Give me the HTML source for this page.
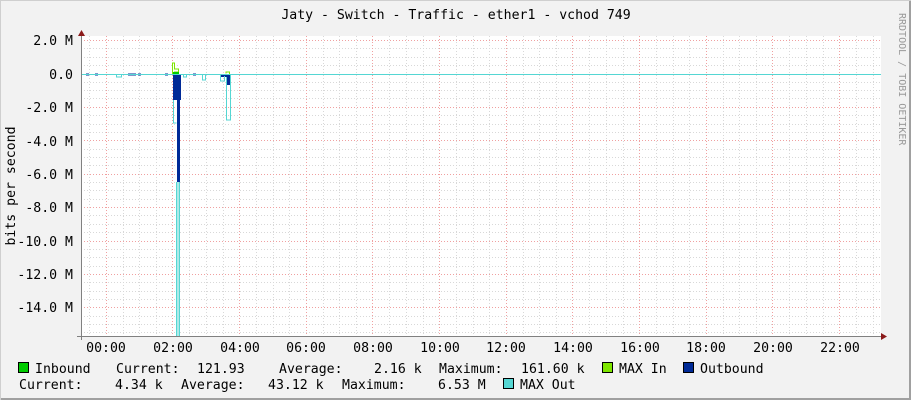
<!DOCTYPE html>
<html><head><style>
body{margin:0;background:#f2f2f2}
svg{display:block}
text{font-family:"DejaVu Sans Mono","Liberation Mono",monospace;font-size:13.2px;fill:#000}
</style></head><body>
<svg width="911" height="400" xmlns="http://www.w3.org/2000/svg">
<rect x="0" y="0" width="911" height="400" fill="#f2f2f2"/>
<rect x="909" y="0" width="2" height="400" fill="#a0a0a0"/>
<rect x="0" y="398" width="911" height="2" fill="#a0a0a0"/>
<rect x="0" y="0" width="911" height="1" fill="#cfcfcf"/>
<rect x="0" y="0" width="1" height="400" fill="#cfcfcf"/>
<rect x="81" y="36" width="800" height="300" fill="#fff"/>
<g stroke="#d8d8d8" stroke-width="1" stroke-dasharray="1,2">
<path d="M89.5 36V336M123.5 36V336M139.5 36V336M156.5 36V336M189.5 36V336M206.5 36V336M223.5 36V336M256.5 36V336M273.5 36V336M289.5 36V336M323.5 36V336M339.5 36V336M356.5 36V336M389.5 36V336M406.5 36V336M423.5 36V336M456.5 36V336M473.5 36V336M489.5 36V336M523.5 36V336M539.5 36V336M556.5 36V336M589.5 36V336M606.5 36V336M623.5 36V336M656.5 36V336M673.5 36V336M689.5 36V336M723.5 36V336M739.5 36V336M756.5 36V336M789.5 36V336M806.5 36V336M823.5 36V336M856.5 36V336M873.5 36V336"/>
<path d="M81 48.5H881M81 57.5H881M81 65.5H881M81 82.5H881M81 90.5H881M81 98.5H881M81 115.5H881M81 124.5H881M81 132.5H881M81 149.5H881M81 157.5H881M81 165.5H881M81 182.5H881M81 190.5H881M81 199.5H881M81 215.5H881M81 224.5H881M81 232.5H881M81 249.5H881M81 257.5H881M81 266.5H881M81 282.5H881M81 291.5H881M81 299.5H881M81 316.5H881M81 324.5H881M81 332.5H881"/>
</g>
<g stroke="#f0a0a0" stroke-width="1" stroke-dasharray="1,2">
<path d="M106.5 36V336M172.5 36V336M239.5 36V336M306.5 36V336M372.5 36V336M439.5 36V336M506.5 36V336M572.5 36V336M639.5 36V336M706.5 36V336M772.5 36V336M839.5 36V336"/>
<path d="M81 40.5H881M81 107.5H881M81 140.5H881M81 174.5H881M81 207.5H881M81 241.5H881M81 274.5H881M81 307.5H881"/>
</g>
<rect x="176" y="182" width="3" height="154" fill="#aee9e7"/>
<path d="M176.5 182V336M179.5 182V336" stroke="#55d6d3" stroke-width="1"/>
<path d="M173.5 74V123H176.5" stroke="#55d6d3" fill="none"/>
<rect x="173" y="74" width="8" height="26" fill="#002a97"/>
<rect x="177" y="74" width="3" height="108" fill="#002a97"/>
<path d="M172.5 74V63H174.5V69H178.5V72H174" stroke="#7ee600" fill="none"/>
<rect x="173" y="72" width="6" height="2" fill="#00cc00"/>
<rect x="220" y="74" width="10" height="3" fill="#002a97"/>
<rect x="226" y="74" width="4" height="11" fill="#002a97"/>
<path d="M226.5 77V120H230.5V74M220.5 74V81H224.5V76" stroke="#55d6d3" fill="none"/>
<path d="M226 73.5V72H229.5V74" stroke="#7ee600" fill="none"/>
<path d="M116.5 74V77H121.5V74M183.5 74V77H186.5V74M202.5 74V80H205.5V74" stroke="#55d6d3" fill="none"/>
<path d="M86 74.5h3M95 74.5h3M128 74.5h8M138 74.5h3M165 74.5h3M193 74.5h3" stroke="#002a97" stroke-width="2"/>
<path d="M81 74.5H881" stroke="#55d6d3" stroke-width="1"/>
<path d="M81.5 32V340M77 336.5H885" stroke="#808080" stroke-width="1"/>
<path d="M78 36L81.5 30L85 36Z" fill="#8b1a1a"/>
<path d="M881 333L887 336.5L881 340Z" fill="#8b1a1a"/>
<g text-anchor="end">
<text x="73" y="45">2.0 M</text><text x="73" y="79">0.0</text><text x="73" y="112">-2.0 M</text><text x="73" y="146">-4.0 M</text><text x="73" y="179">-6.0 M</text><text x="73" y="212">-8.0 M</text><text x="73" y="246">-10.0 M</text><text x="73" y="279">-12.0 M</text><text x="73" y="312">-14.0 M</text>
</g>
<text transform="translate(15,186) rotate(-90)" text-anchor="middle">bits per second</text>
<text x="456" y="19" text-anchor="middle">Jaty - Switch - Traffic - ether1 - vchod 749</text>
<text transform="translate(899,13) rotate(90)" style="font-size:10px;fill:#999">RRDTOOL / TOBI OETIKER</text>
<g text-anchor="middle">
<text x="106" y="352">00:00</text><text x="173" y="352">02:00</text><text x="240" y="352">04:00</text><text x="306" y="352">06:00</text><text x="373" y="352">08:00</text><text x="440" y="352">10:00</text><text x="506" y="352">12:00</text><text x="573" y="352">14:00</text><text x="640" y="352">16:00</text><text x="706" y="352">18:00</text><text x="773" y="352">20:00</text><text x="840" y="352">22:00</text>
</g>
<rect x="18.5" y="362.5" width="10" height="10" fill="#00cc00" stroke="#000"/>
<text x="35" y="373">Inbound</text>
<text x="116" y="373">Current:</text><text x="197" y="373">121.93</text>
<text x="279" y="373">Average:</text><text x="374" y="373">2.16 k</text>
<text x="439" y="373">Maximum:</text><text x="521" y="373">161.60 k</text>
<rect x="602.5" y="362.5" width="10" height="10" fill="#7ee600" stroke="#000"/>
<text x="619" y="373">MAX In</text>
<rect x="683.5" y="362.5" width="10" height="10" fill="#002a97" stroke="#000"/>
<text x="700" y="373">Outbound</text>
<text x="19" y="389">Current:</text><text x="115" y="389">4.34 k</text>
<text x="181" y="389">Average:</text><text x="268" y="389">43.12 k</text>
<text x="342" y="389">Maximum:</text><text x="438" y="389">6.53 M</text>
<rect x="503.5" y="378.5" width="10" height="10" fill="#55d6d3" stroke="#000"/>
<text x="520" y="389">MAX Out</text>
</svg>
</body></html>
